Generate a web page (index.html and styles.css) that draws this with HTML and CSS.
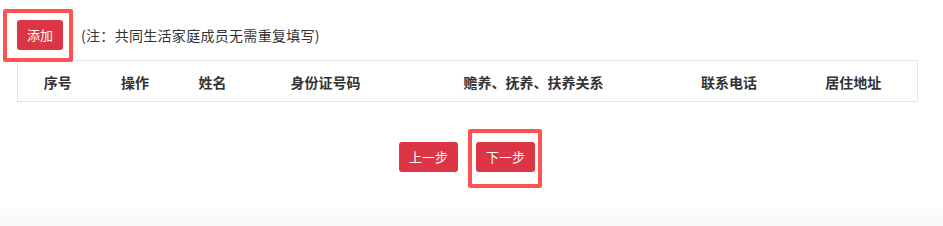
FILE: index.html
```html
<!DOCTYPE html>
<html lang="zh">
<head>
<meta charset="utf-8">
<link rel="stylesheet" href="styles.css">
</head>
<body>
<div class="page">
  <div class="toolbar">
    <span class="mark mark-add">
      <button class="btn">添加</button>
    </span>
    <span class="note">(注：共同生活家庭成员无需重复填写)</span>
  </div>
  <table class="grid">
    <colgroup>
      <col class="c1"><col class="c2"><col class="c3"><col class="c4"><col class="c5"><col class="c6"><col class="c7">
    </colgroup>
    <thead>
      <tr>
        <th>序号</th>
        <th>操作</th>
        <th>姓名</th>
        <th>身份证号码</th>
        <th>赡养、抚养、扶养关系</th>
        <th>联系电话</th>
        <th>居住地址</th>
      </tr>
    </thead>
  </table>
  <div class="actions">
    <button class="btn btn-wide">上一步</button>
    <span class="mark mark-next">
      <button class="btn btn-wide">下一步</button>
    </span>
  </div>
</div>
<div class="footer-band"></div>
</body>
</html>
```

FILE: styles.css
```css
html, body {
  margin: 0;
  padding: 0;
  background: #ffffff;
}
body {
  width: 943px;
  height: 226px;
  overflow: hidden;
  font-family: "Noto Sans CJK SC", "Noto Sans", "Liberation Sans", sans-serif;
  color: #333333;
}
.page {
  padding: 20px 26px 0 17px;
  height: 209px;
  box-sizing: border-box;
}
.toolbar {
  display: flex;
  align-items: center;
  height: 30px;
}
.btn {
  height: 30px;
  padding: 0 10px;
  border: none;
  border-radius: 3px;
  background: #dc3545;
  color: #ffffff;
  font-family: "Noto Sans CJK SC", "Noto Sans", sans-serif;
  font-size: 13px;
  line-height: 30px;
  cursor: pointer;
  display: block;
}
.btn-wide {
  width: 59px;
  padding: 0;
}
.note {
  margin-left: 18px;
  font-size: 14px;
  letter-spacing: 0.3px;
  color: #333333;
  line-height: 30px;
}
.mark {
  position: relative;
  display: block;
}
.mark::after {
  content: "";
  position: absolute;
  border: 4px solid #ff5353;
  border-radius: 2px;
  pointer-events: none;
}
.mark-add::after {
  left: -14px;
  top: -11px;
  right: -10px;
  bottom: -12px;
}
.mark-next::after {
  left: -8px;
  top: -13px;
  right: -7px;
  bottom: -16px;
}
.grid {
  margin-top: 10px;
  width: 900px;
  height: 42px;
  border-collapse: collapse;
  table-layout: fixed;
  border: 1px solid #e3e3e3;
}
.c1 { width: 80px; }
.c2 { width: 75px; }
.c3 { width: 80px; }
.c4 { width: 146px; }
.c5 { width: 270px; }
.c6 { width: 121px; }
.c7 { width: 128px; }
.grid th {
  font-size: 14px;
  font-weight: bold;
  color: #333333;
  text-align: center;
  padding: 2px 0 0 0;
  height: 38px;
  white-space: nowrap;
}
.actions {
  margin-top: 40px;
  display: flex;
  justify-content: center;
  gap: 18px;
}
.footer-band {
  height: 17px;
  background: #fafafa;
}
```
